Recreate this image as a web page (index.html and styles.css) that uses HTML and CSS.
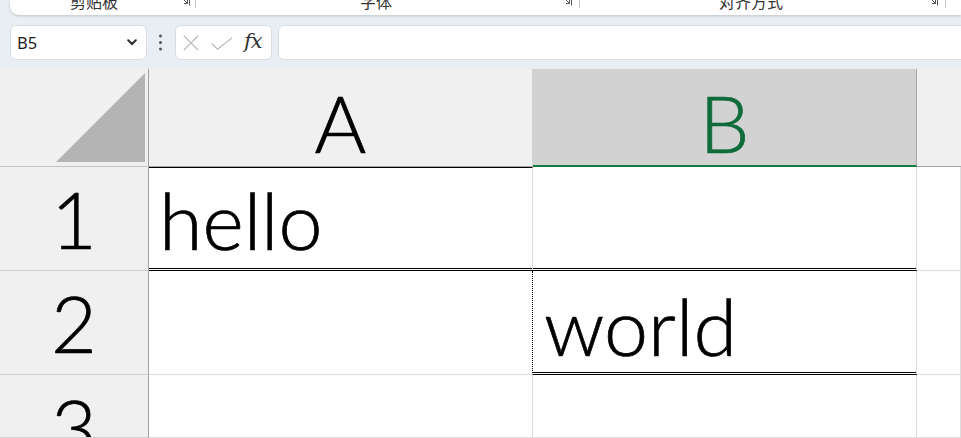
FILE: index.html
```html
<!DOCTYPE html>
<html lang="zh-CN">
<head>
<meta charset="utf-8">
<title>Sheet</title>
<link rel="stylesheet" href="styles.css">
</head>
<body>
<div class="ribbon">
  <div class="group g1">
    <span class="label">剪贴板</span>
    <svg class="launcher" width="10" height="10" viewBox="0 0 10 10"><path d="M0.5 0.5H9.5V9.5" fill="none" stroke="#555" stroke-width="1"/><path d="M2 2L7.5 7.5M7.5 4V7.5H4" fill="none" stroke="#555" stroke-width="1"/></svg>
    <span class="sep"></span>
  </div>
  <div class="group g2">
    <span class="label">字体</span>
    <svg class="launcher" width="10" height="10" viewBox="0 0 10 10"><path d="M0.5 0.5H9.5V9.5" fill="none" stroke="#555" stroke-width="1"/><path d="M2 2L7.5 7.5M7.5 4V7.5H4" fill="none" stroke="#555" stroke-width="1"/></svg>
    <span class="sep"></span>
  </div>
  <div class="group g3">
    <span class="label">对齐方式</span>
    <svg class="launcher" width="10" height="10" viewBox="0 0 10 10"><path d="M0.5 0.5H9.5V9.5" fill="none" stroke="#555" stroke-width="1"/><path d="M2 2L7.5 7.5M7.5 4V7.5H4" fill="none" stroke="#555" stroke-width="1"/></svg>
    <span class="sep"></span>
  </div>
</div>

<div class="fbar">
  <div class="namebox">
    <span class="ref">B5</span>
    <svg width="10" height="7" viewBox="0 0 10 7"><path d="M1.2 1.2L5 5L8.8 1.2" fill="none" stroke="#2b2b2b" stroke-width="2" stroke-linecap="round" stroke-linejoin="round"/></svg>
  </div>
  <svg class="dots" width="28" height="35" viewBox="0 0 28 35"><circle cx="13.5" cy="11" r="1.5" fill="#555"/><circle cx="13.5" cy="17.5" r="1.5" fill="#555"/><circle cx="13.5" cy="24" r="1.5" fill="#555"/></svg>
  <div class="fbtns">
    <svg class="xicon" width="16" height="16" viewBox="0 0 16 16"><path d="M0.8 0.8L15.2 15.2M15.2 0.8L0.8 15.2" stroke="#bdbdbd" stroke-width="1.3" fill="none"/></svg>
    <svg class="check" width="22" height="13" viewBox="0 0 22 13"><path d="M0.8 6.5L6.5 12.2L21.2 0.8" stroke="#bdbdbd" stroke-width="1.3" fill="none"/></svg>
    <span class="fx">fx</span>
  </div>
  <div class="finput"></div>
</div>

<div class="sheet">
  <div class="corner"><svg width="89" height="89" viewBox="0 0 89 89"><polygon points="89,0 89,89 0,89" fill="#b4b4b4"/></svg></div>
  <div class="ch chA">A</div>
  <div class="ch chB">B</div>
  <div class="ch chC"></div>

  <div class="rh">1</div>
  <div class="c a1">hello</div>
  <div class="c b1"></div>
  <div class="c"></div>

  <div class="rh">2</div>
  <div class="c a2"></div>
  <div class="c b2">world</div>
  <div class="c"></div>

  <div class="rh">3</div>
  <div class="c"></div>
  <div class="c"></div>
  <div class="c"></div>
</div>
</body>
</html>
```

FILE: styles.css
```css
* { box-sizing: border-box; }

html, body {
  margin: 0;
  width: 961px;
  height: 438px;
  overflow: hidden;
}

body {
  background: #e8eef3;
  font-family: "Liberation Sans", Arial, sans-serif;
}

/* ribbon */
.ribbon {
  margin-left: 10px;
  height: 15px;
  background: #ffffff;
  border-bottom-left-radius: 9px;
  box-shadow: 0 1px 3px rgba(0, 0, 0, 0.18);
  display: flex;
  align-items: flex-end;
  overflow: hidden;
}

.group {
  display: flex;
  align-items: flex-end;
  height: 100%;
  flex: none;
}

.g1 { width: 186px; }
.g2 { width: 384px; }
.g3 { width: 366px; }

.label {
  flex: 1;
  text-align: center;
  font-family: "Noto Sans CJK SC", sans-serif;
  font-size: 16px;
  line-height: 16px;
  color: #333;
  margin-bottom: 6px;
}

.g2 .label { padding-right: 6px; }
.g3 .label { padding-right: 6px; }

.launcher {
  align-self: flex-start;
  margin-top: -4px;
  margin-left: 2px;
  margin-right: 5px;
  flex: none;
}

.g2 .launcher, .g3 .launcher { margin-left: 0; margin-right: 7px; }

.sep {
  align-self: flex-start;
  width: 1px;
  height: 8px;
  background: #c8c8c8;
  flex: none;
}

/* formula bar */
.fbar {
  margin-top: 10px;
  height: 35px;
  padding-left: 10px;
  display: flex;
}

.namebox {
  width: 137px;
  height: 35px;
  background: #fff;
  border: 1px solid #d8dde2;
  border-radius: 6px;
  display: flex;
  align-items: center;
  justify-content: space-between;
  padding: 0 9px 0 6px;
  flex: none;
}

.ref {
  font-family: "Noto Sans", sans-serif;
  font-size: 16.5px;
  color: #1e1e1e;
}

.dots { flex: none; }

.fbtns {
  width: 97px;
  height: 35px;
  background: #fff;
  border: 1px solid #d8dde2;
  border-radius: 6px;
  display: flex;
  align-items: center;
  padding-left: 7px;
  flex: none;
}

.xicon { margin-right: 12px; flex: none; }
.check { margin-right: 11px; margin-top: 1px; flex: none; }

.fx {
  font-family: "DejaVu Serif", "Liberation Serif", serif;
  font-style: italic;
  font-size: 21px;
  color: #333;
  line-height: 1;
  margin-top: -2px;
  letter-spacing: -1px;
}

.finput {
  flex: 1;
  margin-left: 6px;
  margin-right: -20px;
  height: 35px;
  background: #fff;
  border: 1px solid #d8dde2;
  border-radius: 6px;
}

/* sheet */
.sheet {
  margin-top: 9px;
  height: 369px;
  display: grid;
  grid-template-columns: 149px 384px 384px 1fr;
  grid-template-rows: 98px 104px 104px 1fr;
  font-family: "Lato", "Liberation Sans", sans-serif;
  font-weight: 300;
  font-size: 79px;
  line-height: 78px;
  color: #000;
  -webkit-text-stroke: 0.7px currentColor;
}

.corner {
  background: #f0f0f0;
  border-right: 1px solid #a0a0a0;
  border-bottom: 1px solid #c4c4c4;
  display: flex;
  justify-content: flex-end;
  align-items: flex-end;
  padding: 4px 3px 4px 0;
}

.ch {
  background: #f0f0f0;
  border-bottom: 1px solid #a6a6a6;
  display: flex;
  justify-content: center;
  align-items: center;
  padding-top: 11px;
}

.chA { border-right: 1px solid #d2d2d2; }

.chB {
  background: #d2d2d2;
  border-right: 1px solid #a8a8a8;
  border-bottom: 2px solid #107c41;
  color: #0f6b3a;
}

.rh {
  background: #f0f0f0;
  border-right: 1px solid #9f9f9f;
  border-bottom: 1px solid #cfcfcf;
  display: flex;
  justify-content: center;
  align-items: flex-start;
  padding-top: 13px;
  overflow: hidden;
}

.c {
  background: #fff;
  border-right: 1px solid #dcdcdc;
  border-bottom: 1px solid #dcdcdc;
  overflow: hidden;
  white-space: nowrap;
}

.a1 {
  border-top: 1px solid #000;
  border-bottom: 3px double #000;
  padding: 13px 0 0 10px;
}

.b1 { border-bottom: 3px double #000; }

.a2 { border-right: 1px dotted #000; }

.b2 {
  border-bottom: 3px double #000;
  padding: 16px 0 0 11px;
}
```
